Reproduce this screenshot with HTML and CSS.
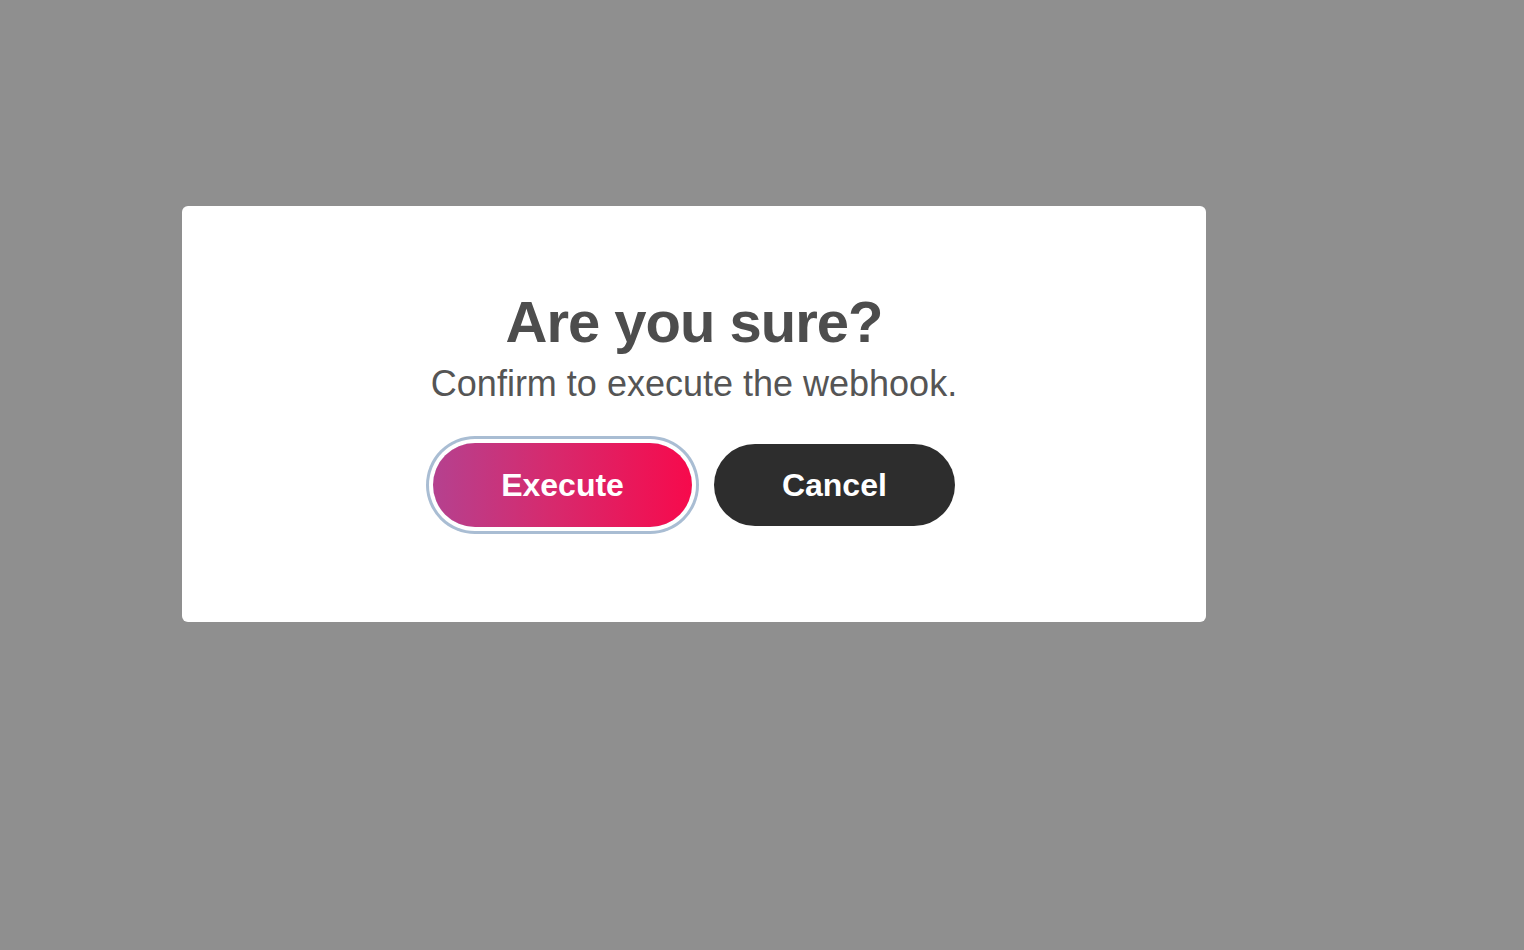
FILE: index.html
```html
<!DOCTYPE html>
<html lang="en">
<head>
<meta charset="utf-8">
<title>Are you sure?</title>
<link rel="stylesheet" href="styles.css">
</head>
<body>
<div class="overlay">
  <div class="dialog" role="dialog">
    <h2 class="title">Are you sure?</h2>
    <p class="subtitle">Confirm to execute the webhook.</p>
    <div class="actions">
      <button class="btn btn-execute">Execute</button>
      <button class="btn btn-cancel">Cancel</button>
    </div>
  </div>
</div>
</body>
</html>
```
FILE: styles.css
```css
html, body {
  margin: 0;
  padding: 0;
  height: 100%;
}
body {
  background: #8f8f8f;
  font-family: "Liberation Sans", Arial, sans-serif;
}
.overlay {
  padding: 206px 0 0 182px;
}
.dialog {
  width: 1024px;
  box-sizing: border-box;
  background: #fff;
  border-radius: 6px;
  padding: 84px 0 95px;
  display: flex;
  flex-direction: column;
  align-items: center;
}
.title {
  margin: 0;
  font-size: 58px;
  line-height: 64px;
  font-weight: 700;
  letter-spacing: -1px;
  color: #4d4d4d;
}
.subtitle {
  margin: 8px 0 0;
  font-size: 36px;
  line-height: 44px;
  font-weight: 400;
  color: #555;
}
.actions {
  margin-top: 37px;
  display: flex;
  gap: 22px;
  align-items: center;
}
.btn {
  border: none;
  height: 82px;
  padding: 0 68px;
  border-radius: 41px;
  font-family: "Liberation Sans", Arial, sans-serif;
  font-size: 32px;
  font-weight: 700;
  color: #fff;
  cursor: pointer;
}
.btn-execute {
  height: 84px;
  border-radius: 42px;
  background: linear-gradient(90deg, #b5418f 0%, #d62a6e 45%, #f70a4c 100%);
  box-shadow: 0 0 0 4px #fff, 0 0 0 7px #a9bdd3;
}
.btn-cancel {
  background: #2d2d2d;
}
```
